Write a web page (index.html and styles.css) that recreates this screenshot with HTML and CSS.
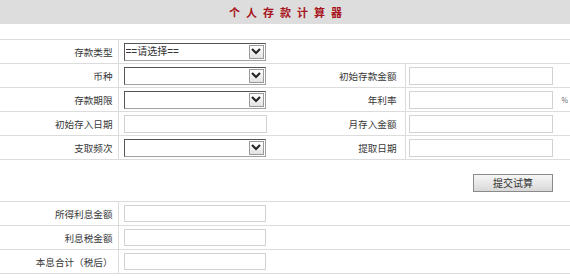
FILE: index.html
```
<!DOCTYPE html>
<html>
<head>
    <title>个人存款计算器</title>
    <link rel="stylesheet" href="styles.css">
</head>
<body>
    <table class="calc">
        <colgroup>
            <col class="c-lbl1">
            <col class="c-in1">
            <col class="c-lbl2">
            <col class="c-in2">
        </colgroup>
        <tr class="head">
            <th colspan="4"><span class="title">个人存款计算器</span></th>
        </tr>
        <tr class="gap"><td colspan="4"></td></tr>

        <tr>
            <td class="lbl">存款类型</td>
            <td class="fld" colspan="3">
                <span class="sel">
                    <select><option>==请选择==</option></select>
                    <span class="arrow"><svg width="12" height="9" viewBox="0 0 12 9"><path d="M2 2 L6 6 L10 2" fill="none" stroke="#222" stroke-width="2"/></svg></span>
                </span>
            </td>
        </tr>
        <tr>
            <td class="lbl">币种</td>
            <td class="fld">
                <span class="sel">
                    <select><option></option></select>
                    <span class="arrow"><svg width="12" height="9" viewBox="0 0 12 9"><path d="M2 2 L6 6 L10 2" fill="none" stroke="#222" stroke-width="2"/></svg></span>
                </span>
            </td>
            <td class="lbl lbl2">初始存款金额</td>
            <td class="fld fld2"><input type="text"></td>
        </tr>
        <tr>
            <td class="lbl">存款期限</td>
            <td class="fld">
                <span class="sel">
                    <select><option></option></select>
                    <span class="arrow"><svg width="12" height="9" viewBox="0 0 12 9"><path d="M2 2 L6 6 L10 2" fill="none" stroke="#222" stroke-width="2"/></svg></span>
                </span>
            </td>
            <td class="lbl lbl2">年利率</td>
            <td class="fld fld2"><input type="text"><span class="pct">%</span></td>
        </tr>
        <tr>
            <td class="lbl">初始存入日期</td>
            <td class="fld"><input type="text" class="wide"></td>
            <td class="lbl lbl2">月存入金额</td>
            <td class="fld fld2"><input type="text"></td>
        </tr>
        <tr>
            <td class="lbl">支取频次</td>
            <td class="fld">
                <span class="sel">
                    <select><option></option></select>
                    <span class="arrow"><svg width="12" height="9" viewBox="0 0 12 9"><path d="M2 2 L6 6 L10 2" fill="none" stroke="#222" stroke-width="2"/></svg></span>
                </span>
            </td>
            <td class="lbl lbl2">提取日期</td>
            <td class="fld fld2"><input type="text"></td>
        </tr>

        <tr class="act">
            <td colspan="4"><button type="button">提交试算</button></td>
        </tr>

        <tr>
            <td class="lbl">所得利息金额</td>
            <td class="fld" colspan="3"><input type="text" class="res"></td>
        </tr>
        <tr>
            <td class="lbl">利息税金额</td>
            <td class="fld" colspan="3"><input type="text" class="res"></td>
        </tr>
        <tr>
            <td class="lbl">本息合计（税后）</td>
            <td class="fld" colspan="3"><input type="text" class="res"></td>
        </tr>
    </table>
</body>
</html>
```

FILE: styles.css
```
body {
    margin: 0;
    padding: 0;
    font-family: "Noto Sans CJK SC", "Liberation Sans", sans-serif;
    font-size: 9.6px;
    color: #383838;
    background: #fff;
}

.calc {
    width: 570px;
    border-collapse: collapse;
    table-layout: fixed;
}

.c-lbl1 { width: 118px; }
.c-in1 { width: 167px; }
.c-lbl2 { width: 120px; }
.c-in2 { width: 165px; }

.calc td,
.calc th {
    padding: 0;
    height: 23px;
    border-bottom: 1px solid #dcdcdc;
    line-height: 12px;
}

.head th {
    height: 24px;
    background-color: #dddddd;
    border-bottom: none;
    text-align: center;
}

.title {
    color: #a8141c;
    font-weight: bold;
    font-size: 11px;
    letter-spacing: 6px;
    padding-left: 7px;
}

.gap td {
    height: 15px;
}

.lbl {
    text-align: right;
    padding-right: 5px !important;
    border-right: 1px solid #dcdcdc;
    white-space: nowrap;
}

.lbl2 {
    padding-right: 8px !important;
}

.fld {
    padding-left: 5px !important;
}

.fld2 {
    padding-left: 3px !important;
}

input {
    box-sizing: border-box;
    height: 18px;
    width: 144px;
    margin: 0;
    padding: 0 2px;
    border: 1px solid #d2d2d2;
    background: #fff;
    font-size: 10px;
    vertical-align: middle;
}

input.wide {
    width: 143px;
}

input.res {
    width: 142px;
    height: 17px;
}

.pct {
    font-size: 7px;
    color: #666;
    margin-left: 9px;
    vertical-align: middle;
}

.sel {
    box-sizing: border-box;
    display: inline-flex;
    align-items: center;
    width: 142px;
    height: 18px;
    border: 1px solid #a0a0a0;
    border-top-color: #555;
    border-left-color: #555;
    background: #fff;
    vertical-align: middle;
}

.sel select {
    flex: 1;
    min-width: 0;
    height: 16px;
    border: none;
    margin: 0;
    padding: 0 0 0 1px;
    background: transparent;
    font-family: "Liberation Sans", "Noto Sans CJK SC", sans-serif;
    font-size: 10px;
    color: #333;
    appearance: none;
    -webkit-appearance: none;
    outline: none;
}

.arrow {
    box-sizing: border-box;
    display: flex;
    align-items: center;
    justify-content: center;
    width: 15px;
    height: 14px;
    margin-right: 1px;
    border: 1px solid #9a9a9a;
    background: linear-gradient(#ffffff, #e2e2e2);
}

.act td {
    height: 41px;
    text-align: right;
}

button {
    width: 80px;
    height: 18px;
    margin-right: 17px;
    margin-top: 4px;
    padding: 0;
    border: 1px solid #8a8a8a;
    background: linear-gradient(#f6f6f6, #d8d8d8);
    font-family: "Noto Sans CJK SC", sans-serif;
    font-size: 10px;
    line-height: 14px;
    color: #333;
    cursor: pointer;
}
```
